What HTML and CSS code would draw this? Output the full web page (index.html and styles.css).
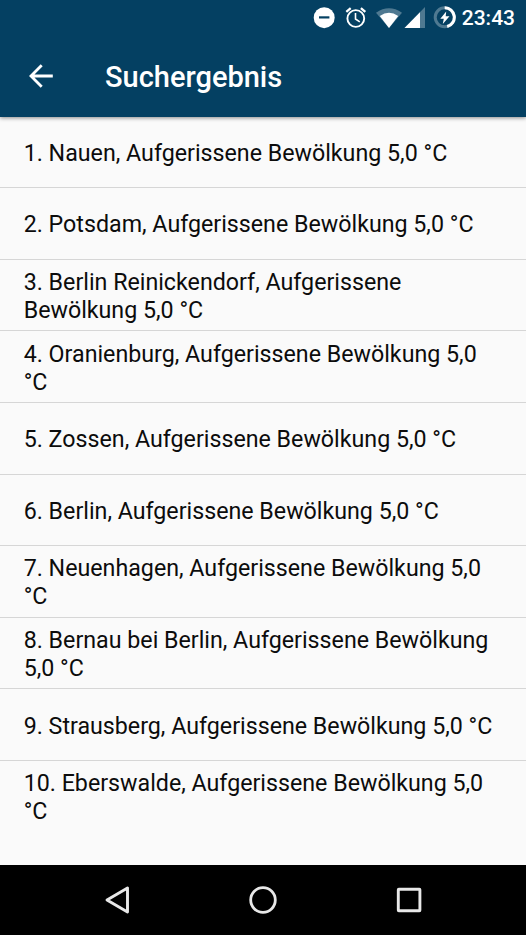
FILE: index.html
```html
<!DOCTYPE html>
<html lang="de">
<head>
<meta charset="utf-8">
<title>Suchergebnis</title>
<link rel="stylesheet" href="styles.css">
</head>
<body>
<div class="screen">
<header class="header">
<div class="status">
<svg class="status-icons" width="144" height="36" viewBox="312 0 144 36">
<circle cx="324.200" cy="17.700" r="10.500" fill="#fff"/><rect x="319" y="16.300" width="10.400" height="2.200" fill="#044062"/>
<g fill="none" stroke="#fff" stroke-width="1.900"><circle cx="355.800" cy="18.500" r="8.400"/><path stroke-width="1.600" d="M355.500 13v6l4.300 2.800"/><path stroke-width="2.300" d="M346.300 11.800l4.400-3.600M365.300 11.800l-4.400-3.600"/></g>
<path d="M376 12.700Q389 4 402 12.700L389 28Z" fill="#fff" fill-opacity=".3"/><path d="M379.800 16Q389 9.500 398.200 16L389 28Z" fill="#fff"/>
<path d="M425 7v21h-20.500Z" fill="#fff" fill-opacity=".3"/><path d="M420 12.200V28h-15.500Z" fill="#fff"/>
<g fill="none" stroke="#fff" stroke-width="3"><circle cx="444.700" cy="17.300" r="9.500" stroke-opacity=".3"/><path d="M444.700 7.800a9.500 9.500 0 0 1 2.500 18.700"/></g>
<path d="M446.200 11.500L440.300 18.800h3.500l-1 5.200 6.700-7.700h-3.800Z" fill="#fff"/>
</svg>
<span class="clock">23:43</span>
</div>
<div class="toolbar">
<svg class="back" width="24" height="24" viewBox="0 0 24 24"><path d="M23.800 12H2.500M12.700 1.200 2 12 12.700 22.800" fill="none" stroke="#fff" stroke-width="2.800"/></svg>
<h1 class="title">Suchergebnis</h1>
</div>
</header>
<main class="list">
<div class="row"><span>1. Nauen, Aufgerissene Bewölkung 5,0 °C</span></div>
<div class="row"><span>2. Potsdam, Aufgerissene Bewölkung 5,0 °C</span></div>
<div class="row"><span>3. Berlin Reinickendorf, Aufgerissene<br>Bewölkung 5,0 °C</span></div>
<div class="row"><span>4. Oranienburg, Aufgerissene Bewölkung 5,0<br>°C</span></div>
<div class="row"><span>5. Zossen, Aufgerissene Bewölkung 5,0 °C</span></div>
<div class="row"><span>6. Berlin, Aufgerissene Bewölkung 5,0 °C</span></div>
<div class="row"><span>7. Neuenhagen, Aufgerissene Bewölkung 5,0<br>°C</span></div>
<div class="row"><span>8. Bernau bei Berlin, Aufgerissene Bewölkung<br>5,0 °C</span></div>
<div class="row"><span>9. Strausberg, Aufgerissene Bewölkung 5,0 °C</span></div>
<div class="row"><span>10. Eberswalde, Aufgerissene Bewölkung 5,0<br>°C</span></div>
</main>
<nav class="nav">
<svg width="26" height="30" viewBox="0 0 26 30"><path d="M23.500 3v24L3 15Z" fill="none" stroke="#e8e8e8" stroke-width="2.900" stroke-linejoin="round"/></svg>
<svg width="30" height="30" viewBox="0 0 30 30"><circle cx="15" cy="15" r="12.300" fill="none" stroke="#e8e8e8" stroke-width="2.800"/></svg>
<svg width="26" height="30" viewBox="0 0 26 30"><rect x="2.300" y="4.200" width="21.600" height="21.600" rx=".5" fill="none" stroke="#e8e8e8" stroke-width="2.900" stroke-linejoin="round"/></svg>
</nav>
</div>
</body>
</html>
```
FILE: styles.css
```css
* { box-sizing: border-box; }
body { margin: 0; background: #fafafa; color: #0c0c0c; font-family: Roboto, sans-serif; }
.screen { width: 526px; height: 935px; display: flex; flex-direction: column; overflow: hidden; }
.header { height: 117px; flex: none; background: #044062; color: #fff; box-shadow: 0 1px 4px rgba(0,0,0,.45); z-index: 1; }
.status { height: 36px; display: flex; justify-content: flex-end; align-items: center; padding-right: 11px; gap: 6px; }
.status-icons { display: block; }
.clock { font-size: 21px; font-weight: 500; line-height: 36px; }
.toolbar { height: 81px; display: flex; align-items: center; padding-left: 29px; gap: 52px; }
.back { display: block; position: relative; top: -1px; }
.title { margin: 0; font-size: 29px; font-weight: 500; line-height: 36px; }
.list { flex: 1; }
.row { height: 71.600px; display: flex; align-items: center; padding: 2px 23.700px 0; border-bottom: 1px solid #d6d6d6; font-size: 23.220px; line-height: 28px; white-space: nowrap; }
.row:first-child { height: 71.150px; }
.row:last-child { height: 71px; border-bottom: 0; padding-top: 1.500px; }
.nav { height: 70px; flex: none; background: #000; display: flex; justify-content: center; align-items: center; gap: 118px; }
```
